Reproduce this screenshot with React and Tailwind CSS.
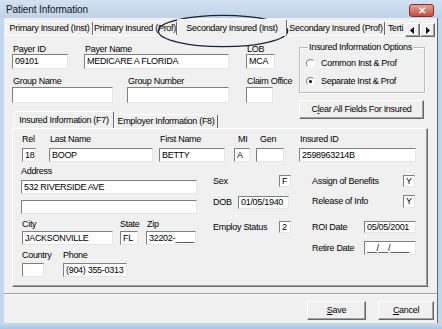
import React from "react";

const inputBase =
  "bg-white border border-t-[#7f7f7f] border-l-[#7f7f7f] border-b-[#e6e6e6] border-r-[#e6e6e6] flex items-center pl-[2px] overflow-hidden whitespace-nowrap";

function Inp({ className = "", children }) {
  return <div className={`${inputBase} ${className}`}>{children}</div>;
}

function Field({ label, className = "", labelCls = "pl-[1px]", inputCls = "", value }) {
  return (
    <div className={`flex flex-col ${className}`}>
      <div className={`h-[9px] whitespace-nowrap ${labelCls}`}>{label}</div>
      <Inp className={inputCls}>{value}</Inp>
    </div>
  );
}

const btnBase =
  "bg-[#f0f0f0] border border-t-white border-l-white border-r-[#696969] border-b-[#696969] shadow-[inset_-1px_-1px_0_#a0a0a0] flex items-center justify-center whitespace-nowrap";

function Radio({ checked }) {
  return (
    <div className="w-[9px] h-[9px] rounded-full bg-white border border-t-[#808080] border-l-[#808080] border-r-[#f8f8f8] border-b-[#f8f8f8] flex items-center justify-center">
      {checked && <div className="w-[3px] h-[3px] rounded-full bg-black" />}
    </div>
  );
}

function Tab({ children, className = "" }) {
  return (
    <div
      className={`h-[14px] flex items-center justify-center whitespace-nowrap border-t border-l border-r border-t-white border-l-white border-r-[#696969] rounded-t-[2px] ${className}`}
    >
      {children}
    </div>
  );
}

function SelTab({ children, className = "" }) {
  return (
    <div
      className={`h-[17px] flex items-center justify-center whitespace-nowrap border-t border-l border-r border-t-white border-l-white border-r-[#696969] rounded-t-[2px] bg-[#f0f0f0] relative z-10 ${className}`}
    >
      {children}
    </div>
  );
}

export default function App() {
  return (
    <div className="relative w-[442px] h-[329px] overflow-hidden bg-[#c2d6ec] font-['Liberation_Sans',Arial,sans-serif] text-[9px] leading-[9px] tracking-[-0.3px] text-black flex flex-col">
      {/* Title bar */}
      <div className="h-[18px] shrink-0 flex pl-[6px] pr-[8px] bg-gradient-to-b from-[#d2e2f3] to-[#bed3ea]">
        <span className="mt-[5px] text-[10px] leading-[10px] tracking-[-0.1px] text-[#151515]">
          Patient Information
        </span>
        <div className="ml-auto mt-[4px] w-[25px] h-[13px] rounded-[3px] border border-[#7a3030] bg-gradient-to-b from-[#e8a496] to-[#c7493a] flex items-center justify-center text-white text-[10px] leading-[10px] font-bold tracking-normal">
          ✕
        </div>
      </div>

      <div className="flex h-[305px] shrink-0">
        <div className="w-[4px] shrink-0" />
        {/* Client area */}
        <div className="w-[433px] shrink-0 bg-[#f0f0f0] flex flex-col">
          {/* Outer tab strip */}
          <div className="h-[18px] flex items-end border-b border-b-white">
            <div className="w-[2px]" />
            <Tab className="w-[87px]">Primary Insured (Inst)</Tab>
            <Tab className="w-[84px]">Primary Insured (Prof)</Tab>
            <SelTab className="w-[110px] -mb-px">Secondary Insured (Inst)</SelTab>
            <Tab className="w-[98px]">Secondary Insured (Prof)</Tab>
            <div className="h-[14px] w-[20px] flex items-center pl-[2px] border-t border-l border-t-white border-l-white whitespace-nowrap tracking-[-0.4px]">
              Terti
            </div>
            <div className="flex self-start mt-[5px]">
              <div className={`${btnBase} w-[15px] h-[14px]`}>
                <svg width="5" height="7" viewBox="0 0 5 7">
                  <path d="M4 0 L0 3.5 L4 7 Z" fill="#000" />
                </svg>
              </div>
              <div className={`${btnBase} w-[15px] h-[14px]`}>
                <svg width="5" height="7" viewBox="0 0 5 7">
                  <path d="M1 0 L5 3.5 L1 7 Z" fill="#000" />
                </svg>
              </div>
            </div>
          </div>

          {/* Top section */}
          <div className="flex h-[92px]">
            {/* Left column */}
            <div className="ml-[8px] w-[264px] flex flex-col">
              <div className="mt-[9px] flex">
                <Field label="Payer ID" className="w-[56px]" inputCls="h-[15px]" value="09101" />
                <Field label="Payer Name" className="ml-[16px] w-[145px]" inputCls="h-[15px]" value="MEDICARE A FLORIDA" />
                <Field label="LOB" className="ml-[17px] w-[29px]" inputCls="h-[15px]" value="MCA" />
              </div>
              <div className="mt-[8px] flex">
                <Field label="Group Name" className="w-[101px]" inputCls="mt-[1px] h-[16px]" value="" />
                <Field label="Group Number" className="ml-[14px] w-[102px]" inputCls="mt-[1px] h-[16px]" value="" />
                <Field label="Claim Office" className="ml-[17px] w-[27px]" inputCls="mt-[1px] h-[16px]" value="" />
              </div>
              {/* Inner tab strip */}
              <div className="mt-[9px] h-[16px] flex items-end ml-[2px]">
                <SelTab className="w-[100px] h-[16px]">Insured Information (F7)</SelTab>
                <Tab className="w-[104px]">Employer Information (F8)</Tab>
              </div>
            </div>

            {/* Right column */}
            <div className="ml-[23px] w-[126px] flex flex-col">
              <div className="relative mt-[11px] h-[46px] border border-[#bcbcbc] shadow-[inset_1px_1px_0_#fff,1px_1px_0_#fff] flex flex-col pl-[6px]">
                <span className="absolute -top-[5px] left-[8px] bg-[#f0f0f0] px-[1px] whitespace-nowrap">
                  Insured Information Options
                </span>
                <div className="mt-[10px] h-[10px] flex items-center">
                  <Radio />
                  <span className="ml-[6px]">Common Inst &amp; Prof</span>
                </div>
                <div className="mt-[8px] h-[10px] flex items-center">
                  <Radio checked />
                  <span className="ml-[6px]">Separate Inst &amp; Prof</span>
                </div>
              </div>
              <div className={`${btnBase} mt-[7px] h-[19px] w-[125px]`}>
                <span>
                  C<span className="underline">l</span>ear All Fields For Insured
                </span>
              </div>
            </div>
          </div>

          {/* Inner panel */}
          <div className="ml-[8px] w-[416px] h-[159px] border border-t-white border-l-white border-r-[#696969] border-b-[#696969] shadow-[inset_-1px_-1px_0_#a0a0a0] flex flex-col">
            {/* Row 1 */}
            <div className="mt-[6px] flex">
              <Field label="Rel" className="ml-[9px] w-[14px]" labelCls="" inputCls="mt-[4px] h-[14px]" value="18" />
              <Field label="Last Name" className="ml-[13px] w-[104px]" inputCls="mt-[4px] h-[14px]" value="BOOP" />
              <Field label="First Name" className="ml-[6px] w-[66px]" inputCls="mt-[4px] h-[14px]" value="BETTY" />
              <Field label="MI" className="ml-[9px] w-[16px]" labelCls="pl-[4px]" inputCls="mt-[4px] h-[14px]" value="A" />
              <Field label="Gen" className="ml-[6px] w-[28px]" labelCls="pl-[4px]" inputCls="mt-[4px] h-[14px]" value="" />
              <Field label="Insured ID" className="ml-[15px] w-[117px]" inputCls="mt-[4px] h-[14px]" value="2598963214B" />
            </div>

            {/* Lower section */}
            <div className="flex">
              {/* Left block */}
              <div className="ml-[8px] w-[176px] flex flex-col">
                <div className="mt-[5px] h-[9px]">Address</div>
                <Inp className="mt-[4px] h-[14px] w-[176px]">532 RIVERSIDE AVE</Inp>
                <Inp className="mt-[6px] h-[14px] w-[176px]" />
                <div className="mt-[6px] flex">
                  <Field label="City" className="ml-[1px] w-[91px]" labelCls="" inputCls="mt-[2px] h-[14px]" value="JACKSONVILLE" />
                  <Field label="State" className="ml-[7px] w-[18px]" labelCls="" inputCls="mt-[2px] h-[14px]" value="FL" />
                  <Field label="Zip" className="ml-[8px] w-[50px]" labelCls="pl-[1px]" inputCls="mt-[2px] h-[14px]" value="32202-____" />
                </div>
                <div className="mt-[6px] flex">
                  <Field label="Country" className="ml-[1px] w-[22px]" labelCls="" inputCls="mt-[3px] h-[14px]" value="" />
                  <Field label="Phone" className="ml-[19px] w-[64px]" labelCls="" inputCls="mt-[3px] h-[14px]" value="(904) 355-0313" />
                </div>
              </div>

              {/* Middle block */}
              <div className="ml-[16px] w-[78px] flex flex-col">
                <div className="mt-[13px] h-[12px] flex items-center justify-between">
                  <span>Sex</span>
                  <Inp className="w-[12px] h-[12px]">F</Inp>
                </div>
                <div className="mt-[9px] h-[13px] flex items-center justify-between">
                  <span>DOB</span>
                  <Inp className="w-[51px] h-[13px] mr-[2px]">01/05/1940</Inp>
                </div>
                <div className="mt-[12px] h-[12px] flex items-center justify-between">
                  <span>Employ Status</span>
                  <Inp className="w-[12px] h-[12px]">2</Inp>
                </div>
              </div>

              {/* Right block */}
              <div className="ml-[21px] w-[104px] flex flex-col">
                <div className="mt-[13px] h-[12px] flex items-center justify-between">
                  <span>Assign of Benefits</span>
                  <Inp className="w-[12px] h-[12px] mr-[1px]">Y</Inp>
                </div>
                <div className="mt-[8px] h-[13px] flex items-center justify-between">
                  <span>Release of Info</span>
                  <Inp className="w-[12px] h-[13px] mr-[1px]">Y</Inp>
                </div>
                <div className="mt-[13px] h-[12px] flex items-center justify-between">
                  <span>ROI Date</span>
                  <Inp className="w-[52px] h-[12px]">05/05/2001</Inp>
                </div>
                <div className="mt-[8px] h-[14px] flex items-center justify-between">
                  <span>Retire Date</span>
                  <Inp className="w-[52px] h-[14px]">__/__/____</Inp>
                </div>
              </div>
            </div>
          </div>

          {/* Separator */}
          <div className="mt-[6px] h-[2px] border-t border-t-[#a0a0a0] border-b border-b-white" />

          {/* Buttons */}
          <div className="mt-[6px] flex justify-end pr-[3px]">
            <div className={`${btnBase} w-[59px] h-[19px]`}>
              <span>
                <span className="underline">S</span>ave
              </span>
            </div>
            <div className={`${btnBase} ml-[12px] w-[56px] h-[19px]`}>
              <span>
                <span className="underline">C</span>ancel
              </span>
            </div>
          </div>
        </div>
        <div className="w-px shrink-0 bg-[#4d6a8c]" />
        <div className="flex-1" />
      </div>
      <div className="flex-1 bg-gradient-to-b from-[#c8dcef] to-[#a9c6e3]" />

      {/* Annotation ellipse drawn over the tab strip */}
      <svg className="absolute left-[157px] top-[14px] pointer-events-none" width="132" height="34" viewBox="0 0 132 34">
        <ellipse cx="66" cy="17" rx="64.7" ry="15.7" fill="none" stroke="#17233b" strokeWidth="1.3" />
      </svg>
    </div>
  );
}
